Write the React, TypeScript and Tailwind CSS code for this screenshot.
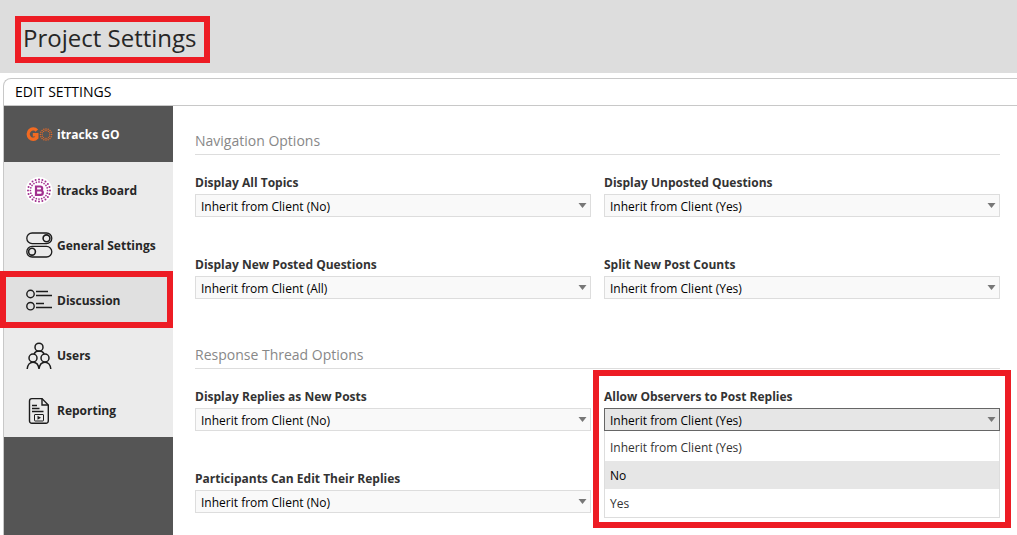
import React, { useState } from 'react';

type Field = {
  id: string;
  label: string;
  inherited: string;
  options: string[];
  highlighted?: boolean;
};

type Section = {
  title: string;
  fields: Field[];
};

const SECTIONS: Section[] = [
  {
    title: 'Navigation Options',
    fields: [
      { id: 'all-topics', label: 'Display All Topics', inherited: 'Inherit from Client (No)', options: ['No', 'Yes'] },
      { id: 'unposted', label: 'Display Unposted Questions', inherited: 'Inherit from Client (Yes)', options: ['No', 'Yes'] },
      { id: 'new-posted', label: 'Display New Posted Questions', inherited: 'Inherit from Client (All)', options: ['All', 'None'] },
      { id: 'split-counts', label: 'Split New Post Counts', inherited: 'Inherit from Client (Yes)', options: ['No', 'Yes'] },
    ],
  },
  {
    title: 'Response Thread Options',
    fields: [
      { id: 'replies-new', label: 'Display Replies as New Posts', inherited: 'Inherit from Client (No)', options: ['No', 'Yes'] },
      { id: 'observers', label: 'Allow Observers to Post Replies', inherited: 'Inherit from Client (Yes)', options: ['No', 'Yes'], highlighted: true },
      { id: 'edit-replies', label: 'Participants Can Edit Their Replies', inherited: 'Inherit from Client (No)', options: ['No', 'Yes'] },
    ],
  },
];

const ring = (count: number, radius: number, center: number) =>
  Array.from({ length: count }, (_, i) => {
    const angle = (i * 2 * Math.PI) / count;
    return { x: center + radius * Math.cos(angle), y: center + radius * Math.sin(angle) };
  });

const GoIcon = () => (
  <svg width="27" height="28" viewBox="0 0 27 28" fill="none" aria-hidden="true">
    <path d="M10.8 9.6A4.9 5.2 0 1 0 10.8 16.6V13.8H6.8" stroke="#f26a21" strokeWidth="3.4" />
    {ring(16, 5.6, 20).map((p, i) => (
      <circle key={`a${i}`} cx={p.x} cy={p.y - 6.5} r="0.75" fill="#e56a28" />
    ))}
    {ring(14, 3.9, 20).map((p, i) => (
      <circle key={`b${i}`} cx={p.x} cy={p.y - 6.5} r="0.6" fill="#e56a28" />
    ))}
  </svg>
);

const BoardIcon = () => (
  <svg width="27" height="28" viewBox="0 0 27 28" fill="none" aria-hidden="true">
    <circle cx="13" cy="13.5" r="13.5" fill="#fff" />
    {ring(20, 11, 13).map((p, i) => (
      <circle key={`a${i}`} cx={p.x} cy={p.y + 0.5} r="1" fill="#a2308f" />
    ))}
    {ring(20, 8.6, 13).map((p, i) => (
      <circle key={`b${i}`} cx={p.x} cy={p.y + 0.5} r="0.85" fill="#a2308f" />
    ))}
    <path d="M10 9.5H14.2A2 2 0 0 1 14.2 13.5H10M14.2 13.5H14.6A2.2 2.2 0 0 1 14.6 17.9H10V8.5" stroke="#a2308f" strokeWidth="2.2" />
  </svg>
);

const TogglesIcon = () => (
  <svg width="27" height="28" viewBox="0 0 27 28" fill="none" stroke="#1c1c1c" strokeWidth="1.3" aria-hidden="true">
    <rect x="0.8" y="1" width="25" height="10.6" rx="5.3" />
    <circle cx="20.5" cy="6.3" r="3.4" strokeWidth="1.6" />
    <rect x="0.8" y="14.4" width="25" height="10.6" rx="5.3" />
    <circle cx="6" cy="19.7" r="3.4" strokeWidth="1.6" />
  </svg>
);

const DiscussionIcon = () => (
  <svg width="27" height="28" viewBox="0 0 27 28" fill="none" stroke="#1c1c1c" strokeWidth="1.4" aria-hidden="true">
    <circle cx="4.5" cy="7" r="3.7" />
    <circle cx="4.5" cy="19.2" r="3.7" />
    <path d="M10 4.5H22M10 8.500H26M10 16.5H18M10 20.5H26" />
  </svg>
);

const UsersIcon = () => (
  <svg width="27" height="28" viewBox="0 0 27 28" fill="none" stroke="#1c1c1c" strokeWidth="1.5" aria-hidden="true">
    <circle cx="13" cy="5.2" r="4" />
    <circle cx="7" cy="16" r="4" />
    <circle cx="19" cy="16" r="4" />
    <path d="M8 11.8C9.2 9.8 11 9 13 9S17 9.8 18.2 11.8M1.2 27C1.5 22.8 4 20.2 7 20.2S12.5 22.8 13 27C13.5 22.8 16 20.2 19 20.2S24.5 22.8 24.8 27" />
  </svg>
);

const ReportIcon = () => (
  <svg width="27" height="28" viewBox="0 0 27 28" fill="none" stroke="#1c1c1c" strokeWidth="1.4" aria-hidden="true">
    <path d="M16 1.6H5.8A2.3 2.3 0 0 0 3.5 3.9V24A2.3 2.3 0 0 0 5.8 26.3H20A2.3 2.3 0 0 0 22.3 24V8Z" />
    <path d="M16 1.6V8H22.300" />
    <path d="M6 8.5H11M6 11.5H13.5M6 14.5H17.5" />
    <rect x="8.5" y="17.5" width="9" height="6.5" rx="0.5" strokeWidth="1" />
    <path d="M11.5 18.800V22.800L15 20.800Z" fill="#1c1c1c" stroke="none" />
  </svg>
);

const NAV = [
  { name: 'itracks GO', Icon: GoIcon },
  { name: 'itracks Board', Icon: BoardIcon },
  { name: 'General Settings', Icon: TogglesIcon },
  { name: 'Discussion', Icon: DiscussionIcon },
  { name: 'Users', Icon: UsersIcon },
  { name: 'Reporting', Icon: ReportIcon },
];

const Sidebar: React.FC = () => {
  const [current, setCurrent] = useState('Discussion');

  return (
    <nav className="w-[169px] shrink-0 bg-[#555555]">
      {NAV.map(({ name, Icon }, i) => (
        <div key={name} className="relative">
          <button
            onClick={() => setCurrent(name)}
            className={`flex w-full items-center gap-1 pt-0.5 pl-[22px] text-left text-[12px] font-bold ${
              i === 0 ? 'h-14 bg-[#555555] text-white' : 'h-[55px] text-[#262626]'
            } ${i > 0 && current === name ? 'bg-[#e0e0e0]' : ''} ${i > 0 && current !== name ? 'bg-[#ebebeb]' : ''}`}
          >
            <Icon />
            <span className="whitespace-nowrap">{name}</span>
          </button>
          {name === 'Discussion' && (
            <div className="pointer-events-none absolute -inset-y-px -left-1 right-0 z-10 border-6 border-[#ed1c24]" />
          )}
        </div>
      ))}
    </nav>
  );
};

type SelectFieldProps = {
  field: Field;
  open: boolean;
  onToggle: () => void;
};

const SelectField: React.FC<SelectFieldProps> = ({ field, open, onToggle }) => {
  const [value, setValue] = useState(field.inherited);
  const [hovered, setHovered] = useState('No');
  const choices = [field.inherited, ...field.options];

  const pick = (choice: string) => {
    setValue(choice);
    onToggle();
  };

  return (
    <div className="relative flex flex-col">
      <label htmlFor={field.id} className="text-[12px] leading-[22px] font-bold text-[#333333]">
        {field.label}
      </label>
      <div className="relative">
        <select
          id={field.id}
          value={value}
          onChange={(e) => setValue(e.target.value)}
          onMouseDown={(e) => {
            e.preventDefault();
            onToggle();
          }}
          className={`block h-[23px] w-full appearance-none border pt-[3px] pl-[5px] text-[12px] text-black outline-none ${
            open ? 'border-[#666666] bg-[#e6e6e6]' : 'border-[#dddddd] bg-[#f9f9f9]'
          }`}
        >
          {choices.map((choice) => (
            <option key={choice}>{choice}</option>
          ))}
        </select>
        <svg className="pointer-events-none absolute top-[9px] right-1" width="9" height="5" viewBox="0 0 9 5" aria-hidden="true">
          <path d="M0.5 0H8.5L4.5 5Z" fill="#777777" />
        </svg>
        {open && (
          <ul className="absolute inset-x-0 top-full z-10 border border-t-0 border-[#dddddd] bg-white pt-0.5">
            {choices.map((choice) => (
              <li key={choice}>
                <button
                  onClick={() => pick(choice)}
                  onMouseEnter={() => setHovered(choice)}
                  className={`block h-7 w-full pt-0.5 pl-[5px] text-left text-[12px] ${
                    hovered === choice ? 'bg-[#e6e6e6] text-black' : 'text-[#333333]'
                  }`}
                >
                  {choice}
                </button>
              </li>
            ))}
          </ul>
        )}
      </div>
      {field.highlighted && (
        <div className="pointer-events-none absolute -top-4 -right-[11px] -left-[11px] z-20 h-[158px] border-6 border-[#ed1c24]" />
      )}
    </div>
  );
};

const App: React.FC = () => {
  const [openField, setOpenField] = useState<string | null>('observers');

  return (
    <div className="flex min-h-screen flex-col overflow-hidden bg-white font-['Open_Sans','Noto_Sans',sans-serif]">
      <header className="flex h-[73px] items-start bg-[#dddddd] pt-4 pl-[15px]">
        <h1 className="border-6 border-[#ed1c24] pr-[7px] pb-1 pl-0.5 text-[24px] leading-[31px] whitespace-nowrap text-[#262626]">
          Project Settings
        </h1>
      </header>

      <div className="mt-[5px] ml-[3px] flex grow flex-col rounded-tl-lg border-t border-l border-[#c8c8c8]">
        <h2 className="border-b border-[#c8c8c8] pl-[11px] text-[14px] leading-[26px] text-black">EDIT SETTINGS</h2>
        <div className="flex grow">
          <Sidebar />
          <main className="flex min-w-0 grow flex-col gap-11 pt-[23px] pr-[17px] pb-5 pl-[22px]">
            {SECTIONS.map((section) => (
              <section key={section.title}>
                <h3 className="border-b border-[#dddddd] pb-0.5 text-[14px] leading-[23px] text-[#888888]">{section.title}</h3>
                <div className="mt-[17px] grid grid-cols-2 gap-x-[13px] gap-y-[37px]">
                  {section.fields.map((field) => (
                    <SelectField
                      key={field.id}
                      field={field}
                      open={openField === field.id}
                      onToggle={() => setOpenField(openField === field.id ? null : field.id)}
                    />
                  ))}
                </div>
              </section>
            ))}
          </main>
        </div>
      </div>
    </div>
  );
};

export default App;
